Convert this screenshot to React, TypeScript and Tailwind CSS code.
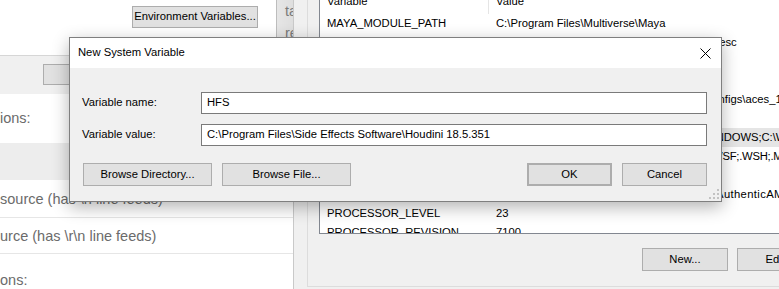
import React from "react";

const sysVars: [string, string, string][] = [
  ["MAYA_MODULE_PATH", "C:\\Program Files\\Multiverse\\Maya", ""],
  ["MAYA_RENDER_DESC_PATH", "C:\\Program Files\\Multiverse\\Maya\\rendererDesc", ""],
  ["MULTIVERSE_LICENSE", "5053@localhost", ""],
  ["NUMBER_OF_PROCESSORS", "16", ""],
  ["OCIO", "C:\\Program Files\\Multiverse\\Maya\\OCIO2\\configs\\aces_1.0.3\\config.ocio", ""],
  ["OS", "Windows_NT", ""],
  ["Path", "C:\\Python39\\;C:\\WINDOWS\\system32;C:\\WINDOWS;C:\\WINDOWS\\System32\\Wbem;C:\\WINDOWS\\System32\\WindowsPowerShell\\v1.0\\", "tracking-[-0.06px]"],
  ["PATHEXT", ".COM;.EXE;.BAT;.CMD;.VBS;.VBE;.JS;.JSE;.WSF;.WSH;.MSC", "tracking-[-0.25px]"],
  ["PROCESSOR_ARCHITECTURE", "AMD64", ""],
  ["PROCESSOR_IDENTIFIER", "AMD64 Family 23 Model 113 Stepping 0, AuthenticAMD", "tracking-[0.35px]"],
  ["PROCESSOR_LEVEL", "23", ""],
  ["PROCESSOR_REVISION", "7100", ""],
];

function WinButton({ label, className = "" }: { label: string; className?: string }) {
  return (
    <div
      className={`flex shrink-0 items-center justify-center border border-[#adadad] bg-[#e1e1e1] text-black ${className}`}
    >
      {label}
    </div>
  );
}

export default function App() {
  return (
    <div className="relative flex h-[289px] w-[779px] overflow-hidden bg-white font-['Liberation_Sans',Arial,sans-serif] text-[11.25px] leading-none text-black">
      {/* Left side: System Properties + settings window behind it */}
      <div className="flex w-[293px] shrink-0 flex-col">
        <div className="flex h-[94px] shrink-0">
          <div className="flex w-[277px] shrink-0 flex-col border-r border-[#bdbdbd]">
            <div className="h-[56px] shrink-0 border-b border-[#d6d6d6] bg-white pl-[132px] pt-[6px]">
              <WinButton label="Environment Variables..." className="h-[22px] w-[126px]" />
            </div>
            <div className="flex-1 bg-[#f0f0f0] pl-[43px] pt-[8px]">
              <WinButton label="" className="h-[21px] w-[80px]" />
            </div>
          </div>
          <div className="flex-1 overflow-hidden bg-gradient-to-r from-[#e6e6e6] to-[#dedede] pl-[8px] pt-[1px] text-[14.5px] leading-[20px] text-[#7a7a7a]">
            <div>ta</div>
            <div className="mt-[2px]">re</div>
          </div>
        </div>

        <div className="flex flex-1 flex-col overflow-hidden whitespace-nowrap text-[14.5px] leading-[20px] text-[#6b6b6b]">
          <div className="h-[49px] shrink-0 bg-white pt-[14px]">ions:</div>
          <div className="h-[37px] shrink-0 bg-[#ededed]" />
          <div className="h-[38px] shrink-0 border-b border-[#e6e6e6] bg-white pt-[9px]">source (has \n line feeds)</div>
          <div className="h-[36px] shrink-0 border-b border-[#e6e6e6] bg-white pt-[8px]">urce (has \r\n line feeds)</div>
          <div className="flex-1 bg-white pt-[16px]">ons:</div>
        </div>
      </div>

      {/* Right side: Environment Variables window */}
      <div className="flex-1 border-l border-[#c9c9c9] bg-[#f0f0f0] pl-[13px]">
        <div className="flex h-[287px] flex-col border-b border-l border-[#dcdcdc] pb-[15px] pl-[11px]">
          <div className="-mt-[11px] h-[245px] w-[520px] shrink-0 overflow-hidden border border-[#828790] bg-white">
            <div className="flex h-[24px] items-center">
              <div className="flex h-full w-[169px] shrink-0 items-center border-r border-[#e5e5e5] pl-[7px]">Variable</div>
              <div className="pl-[7px]">Value</div>
            </div>
            {sysVars.map(([name, value, fit], i) => (
              <div
                key={name}
                className={`flex h-[19px] items-center whitespace-nowrap ${i === 6 ? "bg-[#e5e5e5]" : ""}`}
              >
                <div className="w-[169px] shrink-0 overflow-hidden pl-[7px]">{name}</div>
                <div className={`pl-[7px] ${fit}`}>{value}</div>
              </div>
            ))}
          </div>
          <div className="mt-[14px] flex gap-[9px] pl-[323px]">
            <WinButton label="New..." className="h-[23px] w-[86px]" />
            <WinButton label="Edit..." className="h-[23px] w-[86px]" />
          </div>
        </div>
      </div>

      {/* New System Variable dialog */}
      <div className="absolute left-[69px] top-[37px] flex h-[165px] w-[653px] flex-col border border-[#7f7f7f] bg-[#f0f0f0] shadow-[0_5px_16px_rgba(0,0,0,0.3)]">
        <div className="flex h-[30px] shrink-0 items-center justify-between bg-white pl-[8px] pr-[10px]">
          <span>New System Variable</span>
          <svg width="11" height="11" viewBox="0 0 11 11" className="mt-[1px]">
            <path d="M0.5 0.5 L10.5 10.5 M10.5 0.5 L0.5 10.5" stroke="#000" strokeWidth="1" />
          </svg>
        </div>
        <div className="flex flex-1 flex-col pl-[12px] pr-[14px] pt-[24px]">
          <div className="flex h-[22px] items-center">
            <div className="w-[119px] shrink-0">Variable name:</div>
            <div className="flex h-full flex-1 items-center border border-[#7a7a7a] bg-white pl-[5px]">HFS</div>
          </div>
          <div className="mt-[10px] flex h-[22px] items-center">
            <div className="w-[119px] shrink-0">Variable value:</div>
            <div className="flex h-full flex-1 items-center border border-[#7a7a7a] bg-white pl-[5px]">
              C:\Program Files\Side Effects Software\Houdini 18.5.351
            </div>
          </div>
          <div className="mt-[17px] flex items-center">
            <WinButton label="Browse Directory..." className="ml-[1px] h-[23px] w-[129px]" />
            <WinButton label="Browse File..." className="ml-[10px] h-[23px] w-[129px]" />
            <div className="flex-1" />
            <WinButton label="OK" className="h-[23px] w-[85px] border-2 border-[#0078d7]" />
            <WinButton label="Cancel" className="ml-[10px] h-[23px] w-[85px]" />
          </div>
        </div>
        <svg width="10" height="10" viewBox="0 0 10 10" className="absolute bottom-[2px] right-[2px]">
          <rect x="8" y="0" width="2" height="2" fill="#c2c2c2" />
          <rect x="4" y="4" width="2" height="2" fill="#c2c2c2" />
          <rect x="8" y="4" width="2" height="2" fill="#c2c2c2" />
          <rect x="0" y="8" width="2" height="2" fill="#c2c2c2" />
          <rect x="4" y="8" width="2" height="2" fill="#c2c2c2" />
          <rect x="8" y="8" width="2" height="2" fill="#c2c2c2" />
        </svg>
      </div>
    </div>
  );
}
